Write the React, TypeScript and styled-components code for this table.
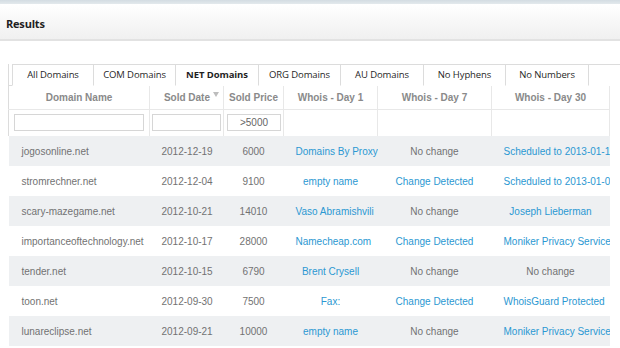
import React from "react";
import styled, { createGlobalStyle } from "styled-components";

const GlobalStyle = createGlobalStyle`
  html, body { margin: 0; padding: 0; background: #ffffff; }
  body { width: 620px; height: 348px; overflow: hidden; font-family: "Liberation Sans", Arial, sans-serif; }
  * { box-sizing: border-box; }
`;

const TopStrip = styled.div`
  height: 4px;
  background: linear-gradient(#d3dce2, #e3e9ec);
`;

const HeaderBar = styled.div`
  height: 37px;
  display: flex;
  align-items: center;
  padding: 3px 0 0 6px;
  background: linear-gradient(#ffffff, #f0f0f0);
  border-bottom: 2px solid #e2e2e2;
`;

const Title = styled.h1`
  margin: 0;
  font-family: "Open Sans", "Noto Sans", sans-serif;
  font-size: 11px;
  font-weight: 700;
  color: #1f1f1f;
  letter-spacing: -0.2px;
`;

const Content = styled.div`
  padding: 23px 0 0 8px;
`;

const TabBar = styled.div`
  display: flex;
  height: 22px;
  padding-left: 3px;
  border-left: 1px solid #dcdcdc;
  border-bottom: 1px solid #dcdcdc;
  white-space: nowrap;
`;

const Tab = styled.div<{ $active?: boolean; $first?: boolean; $w?: number }>`
  flex: 0 0 ${(p) => p.$w ?? 82}px;
  height: 22px;
  display: flex;
  align-items: center;
  justify-content: center;
  padding-bottom: 2px;
  border-top: 1px solid #dcdcdc;
  border-right: 1px solid #dcdcdc;
  border-left: ${(p) => (p.$first ? "1px solid #dcdcdc" : "none")};
  border-bottom: 1px solid ${(p) => (p.$active ? "#ffffff" : "transparent")};
  margin-bottom: -1px;
  background: #ffffff;
  font-family: "Open Sans", "Noto Sans", sans-serif;
  font-size: 9.5px;
  font-weight: ${(p) => (p.$active ? 700 : 400)};
  color: #1f1f1f;
  letter-spacing: -0.1px;
`;

const Table = styled.table`
  width: 601px;
  table-layout: fixed;
  border-collapse: collapse;
  border-spacing: 0;
  font-family: "Liberation Sans", Arial, sans-serif;
`;

const HeadCell = styled.th<{ $sort?: boolean }>`
  height: 23px;
  padding: 0 ${(p) => (p.$sort ? "13px" : "2px")} 0 2px;
  border-right: 1px solid #e8e8e8;
  border-bottom: 1px solid #e8e8e8;
  font-size: 10px;
  font-weight: 700;
  color: #8a8a8a;
  text-align: ${(p) => (p.$sort ? "right" : "center")};
  white-space: nowrap;
  position: relative;
  &:first-child { border-left: 1px solid #dcdcdc; }
`;

const SortIcon = styled.svg`
  position: absolute;
  right: 4px;
  top: 6px;
`;

const FilterCell = styled.td<{ $pl?: number; $pr?: number }>`
  height: 27px;
  padding: 0 ${(p) => p.$pr ?? 2}px 0 ${(p) => p.$pl ?? 2}px;
  border-right: 1px solid #e8e8e8;
  &:first-child { border-left: 1px solid #dcdcdc; }
`;

const FilterInput = styled.input`
  display: block;
  width: 100%;
  height: 17px;
  margin: 0;
  padding: 0 2px;
  border: 1px solid #d6d6d6;
  background: #ffffff;
  font-family: "Liberation Sans", Arial, sans-serif;
  font-size: 10px;
  color: #666666;
  text-align: center;
  outline: none;
`;

const Row = styled.tr<{ $alt?: boolean }>`
  background: ${(p) => (p.$alt ? "#eef0f2" : "#ffffff")};
`;

const Cell = styled.td<{ $left?: boolean; $link?: boolean }>`
  height: 30px;
  padding: 0 ${(p) => (p.$left ? "4px 0 13px" : "12px")};
  font-size: 10px;
  color: ${(p) => (p.$link ? "#2b98d2" : "#727272")};
  text-align: ${(p) => (p.$left ? "left" : "center")};
  white-space: nowrap;
  overflow: hidden;
`;

type Whois = { text: string; link: boolean };
type Item = {
  domain: string;
  date: string;
  price: string;
  d1: Whois;
  d7: Whois;
  d30: Whois;
};

const L = (text: string): Whois => ({ text, link: true });
const G = (text: string): Whois => ({ text, link: false });

const rows: Item[] = [
  { domain: "jogosonline.net", date: "2012-12-19", price: "6000", d1: L("Domains By Proxy"), d7: G("No change"), d30: L("Scheduled to 2013-01-19") },
  { domain: "stromrechner.net", date: "2012-12-04", price: "9100", d1: L("empty name"), d7: L("Change Detected"), d30: L("Scheduled to 2013-01-04") },
  { domain: "scary-mazegame.net", date: "2012-10-21", price: "14010", d1: L("Vaso Abramishvili"), d7: G("No change"), d30: L("Joseph Lieberman") },
  { domain: "importanceoftechnology.net", date: "2012-10-17", price: "28000", d1: L("Namecheap.com"), d7: L("Change Detected"), d30: L("Moniker Privacy Service") },
  { domain: "tender.net", date: "2012-10-15", price: "6790", d1: L("Brent Crysell"), d7: G("No change"), d30: G("No change") },
  { domain: "toon.net", date: "2012-09-30", price: "7500", d1: L("Fax:"), d7: L("Change Detected"), d30: L("WhoisGuard Protected") },
  { domain: "lunareclipse.net", date: "2012-09-21", price: "10000", d1: L("empty name"), d7: G("No change"), d30: L("Moniker Privacy Service") },
];

const tabs: { label: string; w: number }[] = [
  { label: "All Domains", w: 82 },
  { label: "COM Domains", w: 82 },
  { label: "NET Domains", w: 83 },
  { label: "ORG Domains", w: 82 },
  { label: "AU Domains", w: 83 },
  { label: "No Hyphens", w: 82 },
  { label: "No Numbers", w: 83 },
];

const widths = [141, 74, 60, 94, 114, 118];

export default function App() {
  return (
    <>
      <GlobalStyle />
      <TopStrip />
      <HeaderBar>
        <Title>Results</Title>
      </HeaderBar>
      <Content>
        <TabBar>
          {tabs.map((t, i) => (
            <Tab key={t.label} $first={i === 0} $active={t.label === "NET Domains"} $w={t.w}>
              {t.label}
            </Tab>
          ))}
          <Tab $w={120} />
        </TabBar>
        <Table>
          <colgroup>
            {widths.map((w, i) => (
              <col key={i} style={{ width: w }} />
            ))}
          </colgroup>
          <thead>
            <tr>
              <HeadCell>Domain Name</HeadCell>
              <HeadCell $sort>
                Sold Date
                <SortIcon width="6" height="5" viewBox="0 0 6 5">
                  <path d="M0 0 L6 0 L3 5 Z" fill="#bdbdbd" />
                </SortIcon>
              </HeadCell>
              <HeadCell>Sold Price</HeadCell>
              <HeadCell>Whois - Day 1</HeadCell>
              <HeadCell>Whois - Day 7</HeadCell>
              <HeadCell>Whois - Day 30</HeadCell>
            </tr>
          </thead>
          <tbody>
            <tr>
              <FilterCell $pl={5} $pr={5}>
                <FilterInput />
              </FilterCell>
              <FilterCell $pl={2} $pr={2}>
                <FilterInput />
              </FilterCell>
              <FilterCell $pl={3} $pr={2}>
                <FilterInput defaultValue=">5000" />
              </FilterCell>
              <FilterCell />
              <FilterCell />
              <FilterCell />
            </tr>
            {rows.map((r, i) => (
              <Row key={r.domain} $alt={i % 2 === 0}>
                <Cell $left>{r.domain}</Cell>
                <Cell>{r.date}</Cell>
                <Cell>{r.price}</Cell>
                <Cell $link={r.d1.link}>{r.d1.text}</Cell>
                <Cell $link={r.d7.link}>{r.d7.text}</Cell>
                <Cell $link={r.d30.link}>{r.d30.text}</Cell>
              </Row>
            ))}
          </tbody>
        </Table>
      </Content>
    </>
  );
}
